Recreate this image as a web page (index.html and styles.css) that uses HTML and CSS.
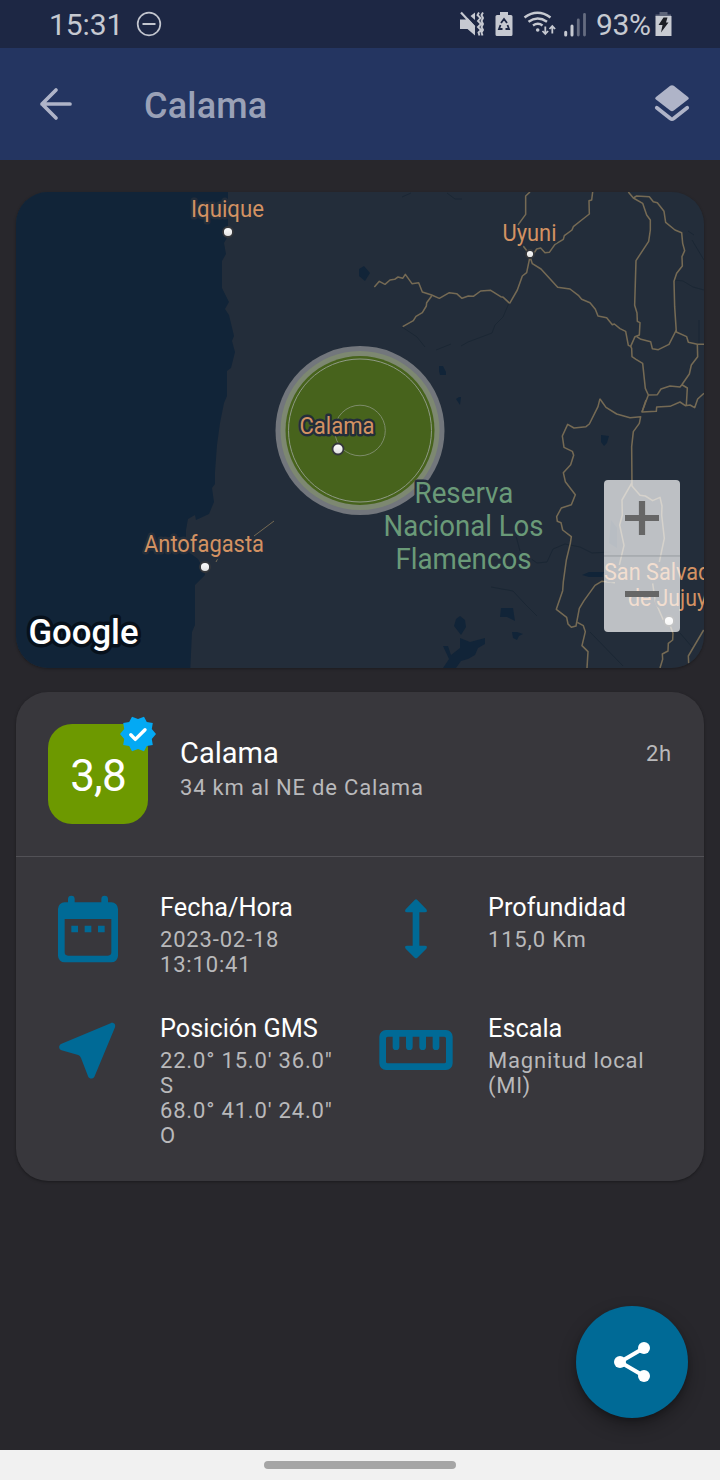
FILE: index.html
```html
<!DOCTYPE html>
<html lang="es">
<head>
<meta charset="utf-8">
<title>Calama</title>
<link rel="stylesheet" href="styles.css">
</head>
<body>
<div class="screen">
  <header class="status">
    <div class="status-left">
      <span class="clock">15:31</span>
      <svg class="dnd" width="26" height="26" viewBox="0 0 26 26"><circle cx="13" cy="13" r="11.3" fill="none" stroke="#c3c6cf" stroke-width="1.7"/><path d="M6.500 13h13" stroke="#c3c6cf" stroke-width="2"/></svg>
    </div>
    <div class="status-right">
      <svg width="140" height="28" viewBox="456 10 140 28" fill="#c6c9d1">
        <path d="M459 19.500h5.500l2-1.500 7.500 8v9.500l-7.500-6.500h-7.500z"/>
        <path d="M474 12.500v7.500l-4.500-4z"/>
        <path d="M460 12.500l13.500 14.500" stroke="#c6c9d1" stroke-width="2.200"/>
        <path d="M478 12.500l-1.500 2.500 3 3-2.500 3 3 3-3 3 3 3-2.500 2.500 1 3M482 12.500l-1.500 2.500 1.500 3-1.500 3 1.500 3-1.500 3 1.500 3-1.500 2.500 1 3" fill="none" stroke="#c6c9d1" stroke-width="1.900"/>
        <path d="M499 12h8v3h3q1.500 0 1.500 1.500v18q0 1.500-1.500 1.500h-14q-1.500 0-1.500-1.500v-18q0-1.500 1.500-1.500h3z"/>
        <path d="M500 23l3-4 3 4M506.500 25l1.500 4h-3.500M501.500 29h-3.500l1.500-4" fill="none" stroke="#1d2744" stroke-width="1.800"/>
        <path d="M523.500 17.500q13-9.500 26 0M527.500 21.800q9-6.500 18.500 0M532 25.500q5-3.500 9.500 0" fill="none" stroke="#c6c9d1" stroke-width="2.500"/>
        <circle cx="536.700" cy="30" r="1.800"/>
        <path d="M544.300 26.500v7M541.500 31l2.800 3 2.800-3M551.300 33.500v-7M548.500 29l2.800-3 2.800 3" fill="none" stroke="#c6c9d1" stroke-width="1.800"/>
        <path d="M564.700 32.200v2.700M571 26v9" stroke="#c6c9d1" stroke-width="3" stroke-linecap="round"/>
        <path d="M577.300 20v15M583.500 14.500v20.500" stroke="#656c80" stroke-width="2.800" stroke-linecap="round"/>
      </svg>
      <span class="percent">93%</span>
      <svg class="battery" width="17" height="26" viewBox="0 0 17 26"><path d="M4.500 1h8v2.500h3.500v2H.5v-2h4z" fill="#5c6378"/><path d="M.5 5h16v20h-16z" fill="#c8cbd2"/><path d="M8.500 6.500h4l-1.500 5h2.500l-7.500 10 1.500-7.500h-4z" fill="#1c1e25"/></svg>
    </div>
  </header>

  <nav class="appbar">
    <svg class="back" width="34" height="34" viewBox="0 0 34 34"><path d="M17 3L3 17l14 14M3 17h28" fill="none" stroke="#afb4c8" stroke-width="3.700" stroke-linecap="round" stroke-linejoin="round"/></svg>
    <h1 class="title">Calama</h1>
    <svg class="layers" width="36" height="38" viewBox="0 0 36 38"><path d="M16.200.8q1.800-1.100 3.600 0L34 11.900q1.600 1.300 0 2.600L19.800 25.600q-1.800 1.300-3.600 0L2 14.500q-1.600-1.300 0-2.600z" fill="#afb4c8"/><path d="M2.800 22.700l13.600 10.800q1.600 1.200 3.200 0l13.600-10.800" fill="none" stroke="#afb4c8" stroke-width="3.800" stroke-linecap="round"/></svg>
  </nav>

  <main class="content">
    <section class="map">
      <svg class="map-canvas" width="688" height="476" viewBox="16 192 688 476">
        <defs>
          <linearGradient id="pin" x1="0" y1="0" x2="0" y2="1"><stop offset="0" stop-color="#fff"/><stop offset="1" stop-color="#dedede"/></linearGradient>
        </defs>
        <path class="land" d="M16 192h688v476H16z"/>
        <path class="water" d="M16 192h212v44l-4 7 2 11-4 7v27l7 14-4 7 4 6 5 21-2 5 3 11-4 16-4 3v25l-3 7-4 20-3 22-2 27v12l-3 4 2 14-5 12-13 6-1-5-7 4-2 11v20l12 9 6 11 1 5-10 10v40l-3 7-2 43H16z"/>
        <path class="water" d="M359 269l5-3 6 7-5 8-6-5zM439 366h4l3 6v3h-6l-1-4zM456 399l3-2h2l-1 8zM601 435l8 1-2 7-3 3-3-4z"/>
        <path class="water" d="M454 626l2-7 4-3 5 4 1 7-5 8zM443 646h5l3 9 9-7v-10l10 4 15-4v6l-7 4-3 7-7 4-7 2-5 7h-13l6-9zM500 617l1-9h12l2 13-8-4zM512 632l5 0 6 2-4 2-2 4-4-2zM582 575l7-3h20v5h-20zM611 520l6 8v20l-8-5z"/>
        <path class="stream" d="M402 327l15 10 8 10M509 303l-6 14-8 8-3 8-24 9-7 4M451 344l-15 6M402 197l9-4M447 193l8 6h7M688 231l6 4M692 240l12 20M674 280l9 1 10 6 11 3M699 320v25M516 536l4 15 17 12 10-1 6-13 12-5 15 3 12 6 19-1M491 587l22 4 12 13 12 12M680 633l12 14M590 632l33 34"/>
        <g class="roads" transform="translate(360 180) scale(.33333)">
          <path d="M449 370L430 352 422 350 392 331 362 333 340 349 325 348 306 355 290 341 268 338 238 355 215 345 187 336 176 308 156 311 136 283 128 295 114 291 104 298 90 300 75 313 58 304 43 321M215 348L200 368 199 378 187 398 168 409 160 422 128 440"/>
          <path d="M510 36L497 48 497 103 473 136M489 197L508 222M520 222L530 207 542 204 555 218 568 217 585 193 610 178 613 167 636 150 640 140 665 120 688 102 687 62 695 60 698 36M510 230L500 278 487 288 472 330 449 370"/>
          <path d="M510 230L517 251 543 267 593 322 630 327 655 346 665 358 690 368 706 388 714 408 740 413 757 434 763 432 780 446 797 454 805 496 812 499 825 470 838 465 840 428 832 424 831 399 824 376 828 242 866 184 871 150 871 120 860 105 848 70 820 54 805 36"/>
          <path d="M820 54L830 48 868 50 880 65 892 68 912 94 917 127 945 150 965 158 968 190 974 212 966 230 967 258 950 280 942 304 944 380 949 456 980 470 985 487 1012 493 1032 493"/>
          <path d="M1012 493L1013 530 994 555 988 582 965 615 960 621 930 618 903 627 892 644 865 645 856 625 848 550 828 538 816 530 815 505 812 499M967 615L982 624 979 675M865 645L846 696 889 694 890 681 930 679 960 666 976 677 990 675 1004 683 1013 657 1032 640M830 470L843 478 872 485 877 506 895 509 927 493 949 450"/>
        </g>
        <g class="roads" transform="translate(500 400) scale(.33333)">
          <path d="M300 -4L294 20 268 72 258 80 222 84 203 73 187 108 192 142 217 154 221 166 212 194 190 218 196 245 226 284 214 314 184 324 170 350 172 364 183 368 188 390 214 410 211 430 199 480 190 545 188 572 169 628 200 652 204 672 214 682 228 678 238 625 252 602 285 556 305 544 345 548"/>
          <path d="M232 667L250 677 256 695 246 737 264 755 261 804M300 -3L318 22 350 42 390 53 422 50 418 70 400 95 395 140 396 258 420 286 436 288 458 302 480 292 486 318 485 345 493 415 478 486M438 0L426 36M396 248L366 300 367 345 359 375 372 436 358 495M458 550L466 605 490 660M510 675L519 700 518 720 505 730 504 753 487 762 488 778 480 804M611 690L565 768 566 790"/>
        </g>
        <path class="thin" d="M254 536l20-15M216 562l2-4"/>
        <g class="quake">
          <circle cx="360" cy="430.500" r="84.500" fill="#72767c"/>
          <circle cx="360" cy="430.500" r="79.500" fill="#7d8871"/>
          <circle cx="360" cy="430.500" r="74.500" fill="#47631c"/>
          <circle cx="360" cy="430.500" r="71.500" fill="none" stroke="#8f9a86" stroke-width="1"/>
          <circle cx="360" cy="430.500" r="25.300" fill="none" stroke="#7d8c6a" stroke-width="1"/>
        </g>
        <g class="pins" fill="url(#pin)">
          <circle cx="228" cy="232" r="5"/><circle cx="530" cy="254" r="4"/><circle cx="338" cy="449" r="5.500"/><circle cx="205" cy="567" r="5"/><circle cx="669" cy="621" r="5"/>
        </g>
        <g class="city">
          <text x="191" y="217" textLength="73" lengthAdjust="spacingAndGlyphs">Iquique</text>
          <text x="502.500" y="241" textLength="54" lengthAdjust="spacingAndGlyphs">Uyuni</text>
          <text x="299.500" y="434" textLength="75" lengthAdjust="spacingAndGlyphs">Calama</text>
          <text x="144" y="552" textLength="120" lengthAdjust="spacingAndGlyphs">Antofagasta</text>
          <text x="604" y="580" textLength="126" lengthAdjust="spacingAndGlyphs">San Salvador</text>
          <text x="628" y="606" textLength="79" lengthAdjust="spacingAndGlyphs">de Jujuy</text>
        </g>
        <g class="park">
          <text x="414.500" y="502.500" textLength="99" lengthAdjust="spacingAndGlyphs">Reserva</text>
          <text x="383.500" y="535.500" textLength="160" lengthAdjust="spacingAndGlyphs">Nacional Los</text>
          <text x="395.500" y="568.500" textLength="136" lengthAdjust="spacingAndGlyphs">Flamencos</text>
        </g>
        <text class="google" x="28.500" y="643.500" textLength="110" lengthAdjust="spacingAndGlyphs">Google</text>
      </svg>
      <div class="zoom">
        <div class="zoom-button"><svg width="34" height="34" viewBox="0 0 34 34"><path d="M17 0v34M0 17h34" stroke="#666" stroke-width="6.200"/></svg></div>
        <div class="zoom-button"><svg width="34" height="34" viewBox="0 0 34 34"><path d="M0 17h34" stroke="#666" stroke-width="6.200"/></svg></div>
      </div>
    </section>

    <section class="card">
      <div class="summary">
        <div class="magnitude">3,8
          <svg class="verified" width="36" height="36" viewBox="0 0 36 36"><path d="M36 18l-4.200 4.900 1 6-6 1.200-2.800 5.200-6-2.300-6 2.300-2.800-5.200-6-1.200 1-6L0 18l4.200-4.900-1-6 6-1.200L12 .7 18 3l6-2.300 2.800 5.200 6 1.200-1 6z" fill="#03a9f4"/><path d="M10.800 18.800l4.500 4.600 9.700-9.700" fill="none" stroke="#fff" stroke-width="3.400" stroke-linecap="round" stroke-linejoin="round"/></svg>
        </div>
        <div class="place">
          <h2 class="place-name">Calama</h2>
          <p class="place-detail">34 km al NE de Calama</p>
        </div>
        <span class="age">2h</span>
      </div>
      <div class="details">
        <div class="item">
          <svg class="icon" viewBox="0 0 24 24"><path fill-rule="evenodd" d="M6 3a1 1 0 0 1 2 0v1h8V3a1 1 0 0 1 2 0v1h1a2 2 0 0 1 2 2v14a2 2 0 0 1-2 2H5a2 2 0 0 1-2-2V6a2 2 0 0 1 2-2h1zM5 9v10a1 1 0 0 0 1 1h12a1 1 0 0 0 1-1V9zM7 11h2v2H7zM11 11h2v2h-2zM15 11h2v2h-2z"/></svg>
          <div><h3 class="label">Fecha/Hora</h3><p class="value">2023-02-18<br>13:10:41</p></div>
        </div>
        <div class="item">
          <svg class="icon" viewBox="0 0 24 24"><path d="M11.600 3.300q.4-.4.800 0l2.700 2.800q.5.900-.4.900H13v10h1.700q.900 0 .4.900l-2.700 2.700q-.4.400-.8 0l-2.700-2.700q-.5-.9.400-.9H11V7H9.300q-.9 0-.4-.9z"/></svg>
          <div><h3 class="label">Profundidad</h3><p class="value">115,0 Km</p></div>
        </div>
        <div class="item">
          <svg class="icon" viewBox="0 0 24 24"><path d="M4.070 10.100L18.800 3.940c.9-.35 1.600.45 1.300 1.200l-6.150 14.780c-.4.850-1.550.85-1.900 0l-2.150-5.550q-.25-.6-.85-.85L4.070 12.070c-.95-.35-.95-1.600 0-1.970z"/></svg>
          <div><h3 class="label">Posición GMS</h3><p class="value">22.0° 15.0' 36.0"<br>S<br>68.0° 41.0' 24.0"<br>O</p></div>
        </div>
        <div class="item">
          <svg class="icon" viewBox="0 0 24 24"><path fill-rule="evenodd" d="M3 6h18a2 2 0 0 1 2 2v8a2 2 0 0 1-2 2H3a2 2 0 0 1-2-2V8a2 2 0 0 1 2-2zm2 2H3.500Q3 8 3 8.500v7q0 .5.500.500h17q.5 0 .5-.5v-7q0-.5-.5-.5H19v3a1 1 0 0 1-2 0V8h-2v3a1 1 0 0 1-2 0V8h-2v3a1 1 0 0 1-2 0V8H7v3a1 1 0 0 1-2 0z"/></svg>
          <div><h3 class="label">Escala</h3><p class="value">Magnitud local<br>(Ml)</p></div>
        </div>
      </div>
    </section>
  </main>

  <div class="actions">
    <div class="fab"><svg width="38" height="42" viewBox="0 0 38 42"><path d="M31 7L7 21l24 14" fill="none" stroke="#fff" stroke-width="4"/><circle cx="31" cy="7" r="6" fill="#fff"/><circle cx="7" cy="21" r="6" fill="#fff"/><circle cx="31" cy="35" r="6" fill="#fff"/></svg></div>
  </div>
  <footer class="gesture"><span class="handle"></span></footer>
</div>
</body>
</html>
```
FILE: styles.css
```css
* { box-sizing: border-box; }
body { margin: 0; background: #28272c; font-family: Roboto, "Liberation Sans", sans-serif; }
h1, h2, h3, p { margin: 0; font-weight: 400; }
svg { display: block; flex: none; }
.screen { width: 720px; height: 1480px; display: flex; flex-direction: column; overflow: hidden; }

.status { height: 48px; padding: 0 48px 0 49px; background: #1d2744; display: flex; justify-content: space-between; color: #c6c9d1; }
.status-left, .status-right { display: flex; align-items: center; }
.clock { width: 72px; font-size: 30px; line-height: 48px; letter-spacing: -0.1px; padding-top: 2px; }
.dnd { margin-left: 15px; }
.percent { font-size: 30px; line-height: 48px; padding-top: 2px; width: 58px; margin: 0 1px 0 -1px; letter-spacing: -0.4px; }

.appbar { height: 112px; padding: 0 30px 0 39px; background: #243561; display: flex; align-items: center; }
.title { font-size: 36px; font-weight: 500; line-height: 44px; color: #9aa1b7; margin-left: 71px; padding-top: 3px; letter-spacing: .2px; flex: 1; }
.layers { margin-top: -1px; }

.content { padding: 32px 16px 0; }
.map { position: relative; height: 476px; border-radius: 32px; overflow: hidden; box-shadow: 0 1px 3px rgba(0,0,0,.3); }
.land { fill: #232d3a; }
.water { fill: #112438; }
.stream { fill: none; stroke: #1b2734; stroke-width: 1; }
.roads { fill: none; stroke: #756a54; stroke-width: 4.6; stroke-linejoin: round; }
.thin { fill: none; stroke: #756a54; stroke-width: 1; }
.pins { stroke: #35373b; stroke-width: 1.8; }
.city, .park { paint-order: stroke; stroke: #232d3a; stroke-width: 5px; stroke-linejoin: round; }
.city { font-size: 24px; fill: #d39262; }
.park { font-size: 30px; fill: #6a9a78; }
.google { font-weight: 500; font-size: 35px; fill: #fff; paint-order: stroke; stroke: #07111c; stroke-width: 7px; stroke-linejoin: round; }
.zoom { position: absolute; right: 24px; bottom: 36px; width: 76px; height: 152px; border-radius: 4px; background: rgba(255,255,255,.7); }
.zoom-button { height: 76px; display: flex; align-items: center; justify-content: center; }
.zoom-button:first-child { box-shadow: inset 0 -1px rgba(130,135,140,.35), 0 1px rgba(130,135,140,.3); }

.card { margin-top: 24px; height: 489px; border-radius: 32px; background: #38373c; box-shadow: 0 1px 3px rgba(0,0,0,.35); }
.summary { height: 165px; padding: 32px; display: flex; border-bottom: 1px solid #525156; }
.magnitude { position: relative; width: 100px; height: 100px; border-radius: 24px; background: #6d9900; color: #fff; font-size: 44px; line-height: 105px; letter-spacing: -0.8px; text-align: center; }
.verified { position: absolute; top: -8px; right: -8px; }
.place { margin-left: 32px; flex: 1; padding-top: 11px; }
.place-name { font-size: 29px; line-height: 36px; color: #fff; }
.place-detail { font-size: 22px; line-height: 25px; margin-top: 4px; letter-spacing: .8px; color: #b9b9bb; }
.age { font-size: 22px; line-height: 26px; padding-top: 17px; letter-spacing: .8px; color: #b9b9bb; }
.details { padding: 32px 0 32px 32px; display: grid; grid-template-columns: 328px 328px; grid-template-rows: 80px 139px; row-gap: 41px; }
.item { display: flex; gap: 32px; white-space: nowrap; }
.icon { width: 80px; height: 80px; fill: #006a96; }
.label { font-size: 25.3px; line-height: 37px; color: #fff; }
.value { margin-top: 1px; font-size: 22px; line-height: 25px; letter-spacing: .82px; color: #b9b9bb; }

.actions { margin-top: auto; padding: 0 32px 32px; display: flex; justify-content: flex-end; }
.fab { width: 112px; height: 112px; border-radius: 50%; background: #006a96; display: flex; align-items: center; justify-content: center; box-shadow: 0 8px 18px rgba(0,0,0,.3), 0 3px 5px rgba(0,0,0,.2); }
.gesture { height: 30px; background: #f1f1f1; display: flex; align-items: center; justify-content: center; }
.handle { width: 192px; height: 8px; border-radius: 4px; background: #a5a5a5; }
```
